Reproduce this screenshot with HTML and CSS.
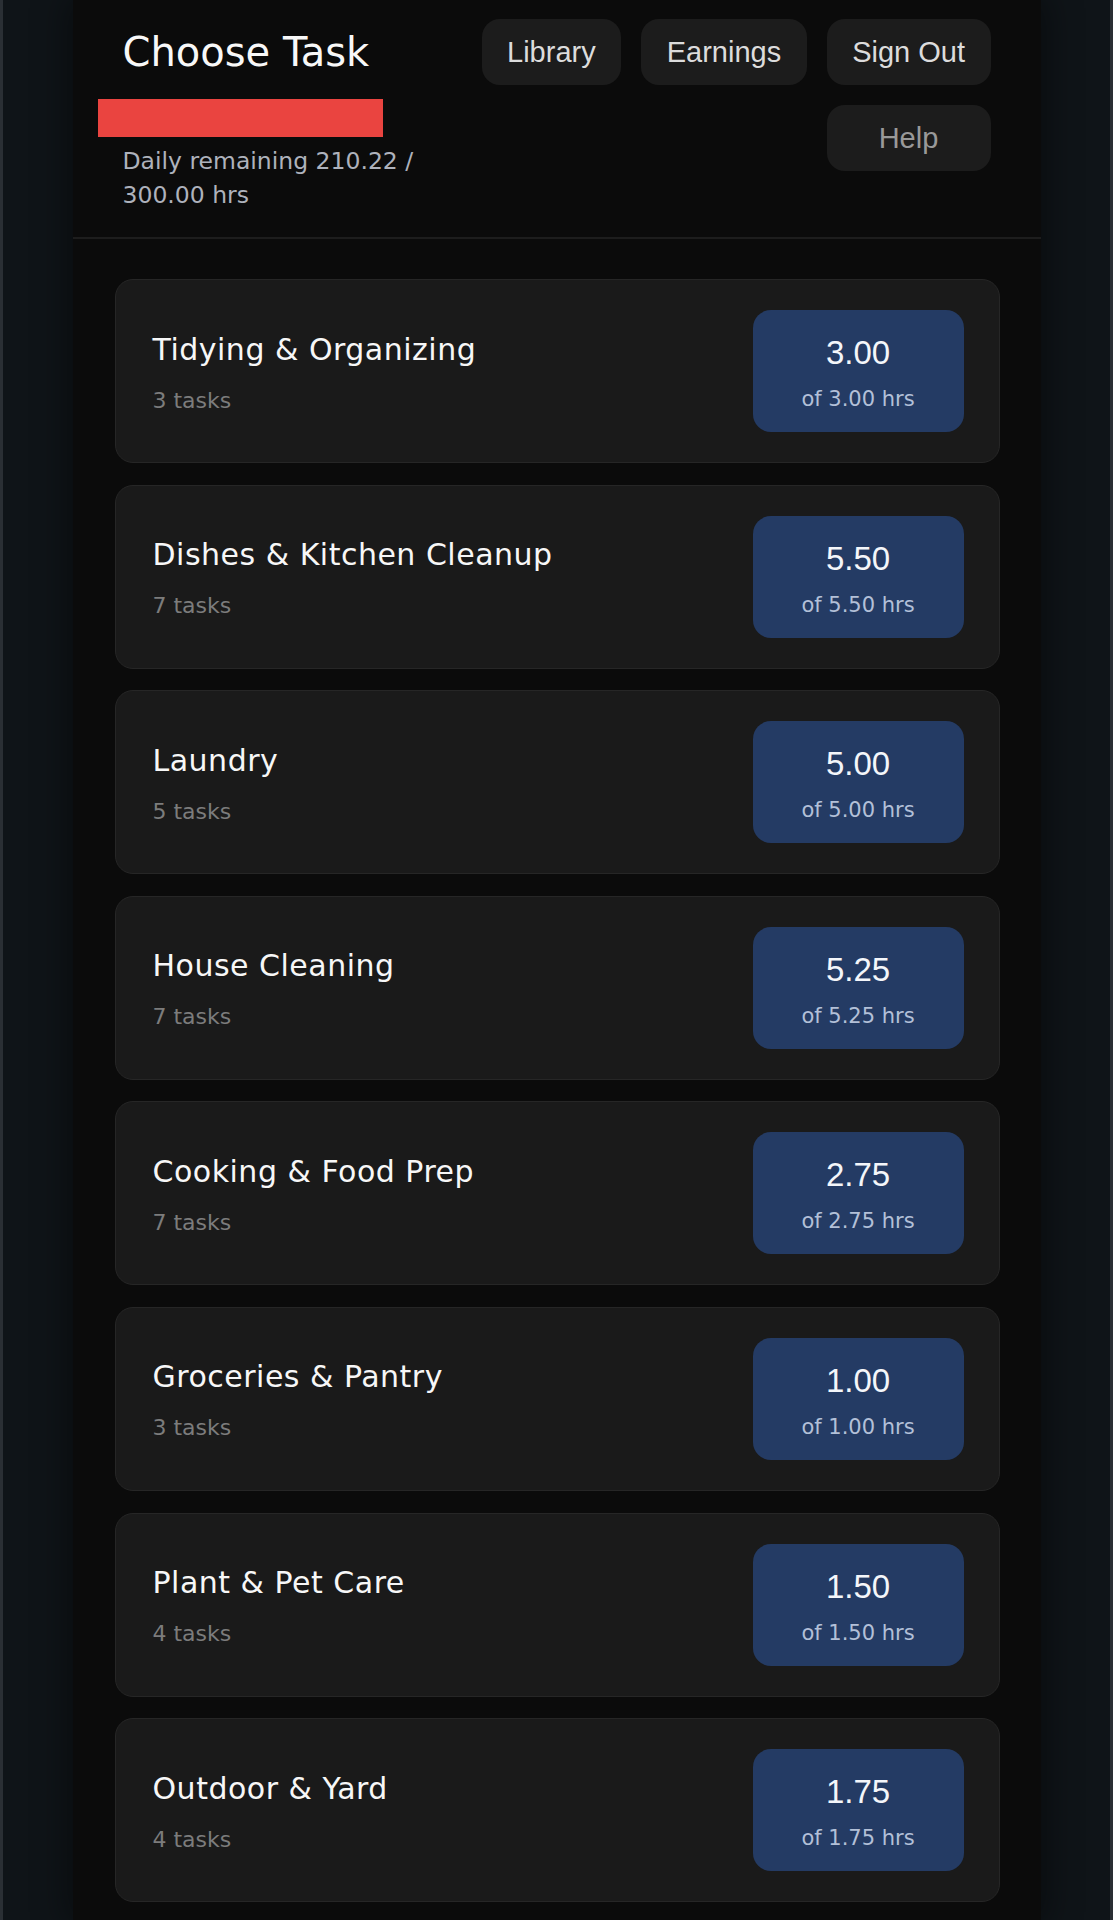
FILE: index.html
```html
<!DOCTYPE html>
<html lang="en">
<head>
    <meta charset="UTF-8">
    <meta name="viewport" content="width=device-width, initial-scale=1.0">
    <title>Choose Task</title>
    <link rel="stylesheet" href="styles.css">
</head>
<body>
    <div class="app">
        <header class="top-bar">
            <div class="top-left">
                <h1>Choose Task</h1>
                <div class="redacted"></div>
                <p class="daily">Daily remaining 210.22 / 300.00 hrs</p>
            </div>
            <nav class="nav">
                <button class="nav-btn">Library</button>
                <button class="nav-btn">Earnings</button>
                <button class="nav-btn">Sign Out</button>
                <button class="nav-btn help-btn">Help</button>
            </nav>
        </header>

        <main class="category-list">
            <div class="category-card">
                <div class="category-info">
                    <div class="category-name">Tidying &amp; Organizing</div>
                    <div class="category-count">3 tasks</div>
                </div>
                <div class="hours-badge">
                    <div class="hours-value">3.00</div>
                    <div class="hours-total">of 3.00 hrs</div>
                </div>
            </div>
            <div class="category-card">
                <div class="category-info">
                    <div class="category-name">Dishes &amp; Kitchen Cleanup</div>
                    <div class="category-count">7 tasks</div>
                </div>
                <div class="hours-badge">
                    <div class="hours-value">5.50</div>
                    <div class="hours-total">of 5.50 hrs</div>
                </div>
            </div>
            <div class="category-card">
                <div class="category-info">
                    <div class="category-name">Laundry</div>
                    <div class="category-count">5 tasks</div>
                </div>
                <div class="hours-badge">
                    <div class="hours-value">5.00</div>
                    <div class="hours-total">of 5.00 hrs</div>
                </div>
            </div>
            <div class="category-card">
                <div class="category-info">
                    <div class="category-name">House Cleaning</div>
                    <div class="category-count">7 tasks</div>
                </div>
                <div class="hours-badge">
                    <div class="hours-value">5.25</div>
                    <div class="hours-total">of 5.25 hrs</div>
                </div>
            </div>
            <div class="category-card">
                <div class="category-info">
                    <div class="category-name">Cooking &amp; Food Prep</div>
                    <div class="category-count">7 tasks</div>
                </div>
                <div class="hours-badge">
                    <div class="hours-value">2.75</div>
                    <div class="hours-total">of 2.75 hrs</div>
                </div>
            </div>
            <div class="category-card">
                <div class="category-info">
                    <div class="category-name">Groceries &amp; Pantry</div>
                    <div class="category-count">3 tasks</div>
                </div>
                <div class="hours-badge">
                    <div class="hours-value">1.00</div>
                    <div class="hours-total">of 1.00 hrs</div>
                </div>
            </div>
            <div class="category-card">
                <div class="category-info">
                    <div class="category-name">Plant &amp; Pet Care</div>
                    <div class="category-count">4 tasks</div>
                </div>
                <div class="hours-badge">
                    <div class="hours-value">1.50</div>
                    <div class="hours-total">of 1.50 hrs</div>
                </div>
            </div>
            <div class="category-card">
                <div class="category-info">
                    <div class="category-name">Outdoor &amp; Yard</div>
                    <div class="category-count">4 tasks</div>
                </div>
                <div class="hours-badge">
                    <div class="hours-value">1.75</div>
                    <div class="hours-total">of 1.75 hrs</div>
                </div>
            </div>
        </main>
    </div>
</body>
</html>
```

FILE: styles.css
```css
html {
    background-color: #0f1418;
}
body {
    margin: 0;
    min-height: 1920px;
    border-left: 3px solid #2a2f34;
    border-right: 3px solid #2a2f34;
    background-color: #0f1418;
    font-family: "DejaVu Sans", sans-serif;
    color: #f2f2f2;
}
.app {
    width: 968px;
    min-height: 1920px;
    margin: 0 auto;
    background-color: #0b0b0b;
    box-shadow: 0 0 34px 4px rgba(0, 0, 0, 0.45);
}
.top-bar {
    display: flex;
    justify-content: space-between;
    align-items: flex-start;
    padding: 19px 50px 25px;
    border-bottom: 2px solid #1d1d1d;
}
.top-left {
    width: 320px;
    flex-shrink: 0;
}
h1 {
    margin: 11px 0 0;
    font-size: 40px;
    font-weight: normal;
    line-height: 45px;
    color: #f8f8f8;
}
.redacted {
    width: 285px;
    height: 38px;
    margin: 24px 0 0 -25px;
    background-color: #ea4440;
}
.daily {
    margin: 7px 0 0;
    font-size: 23.5px;
    line-height: 34px;
    color: #aeb2bc;
}
.nav {
    flex: 1;
    display: flex;
    flex-wrap: wrap;
    justify-content: flex-end;
    gap: 20px 20px;
}
.nav-btn {
    height: 66px;
    padding: 0 25.5px;
    border: none;
    border-radius: 18px;
    background-color: #1c1c1c;
    color: #dcdcdc;
    font-family: "Liberation Sans", Arial, sans-serif;
    font-size: 29px;
    cursor: pointer;
}
.help-btn {
    min-width: 164px;
    color: #999999;
}
.category-list {
    display: flex;
    flex-direction: column;
    gap: 21.6px;
    padding: 40px 41px 0 42px;
}
.category-card {
    display: flex;
    justify-content: space-between;
    align-items: center;
    padding: 30px 35px 30px 37px;
    background-color: #1a1a1a;
    border: 1px solid #262626;
    border-radius: 18px;
}
.category-info {
    padding-top: 4px;
}
.category-name {
    font-size: 30px;
    line-height: 36px;
    letter-spacing: 0.5px;
    color: #f7f7f7;
}
.category-count {
    margin-top: 19px;
    font-size: 22px;
    line-height: 28px;
    color: #7c7c7c;
}
.hours-badge {
    width: 211px;
    height: 122px;
    box-sizing: border-box;
    padding-top: 26px;
    text-align: center;
    background-color: #243b64;
    border-radius: 18px;
}
.hours-value {
    font-family: "Liberation Sans", Arial, sans-serif;
    font-size: 33px;
    line-height: 33px;
    color: #f4f6fa;
}
.hours-total {
    margin-top: 20px;
    font-size: 21px;
    line-height: 21px;
    color: #b3c0d8;
}
```
